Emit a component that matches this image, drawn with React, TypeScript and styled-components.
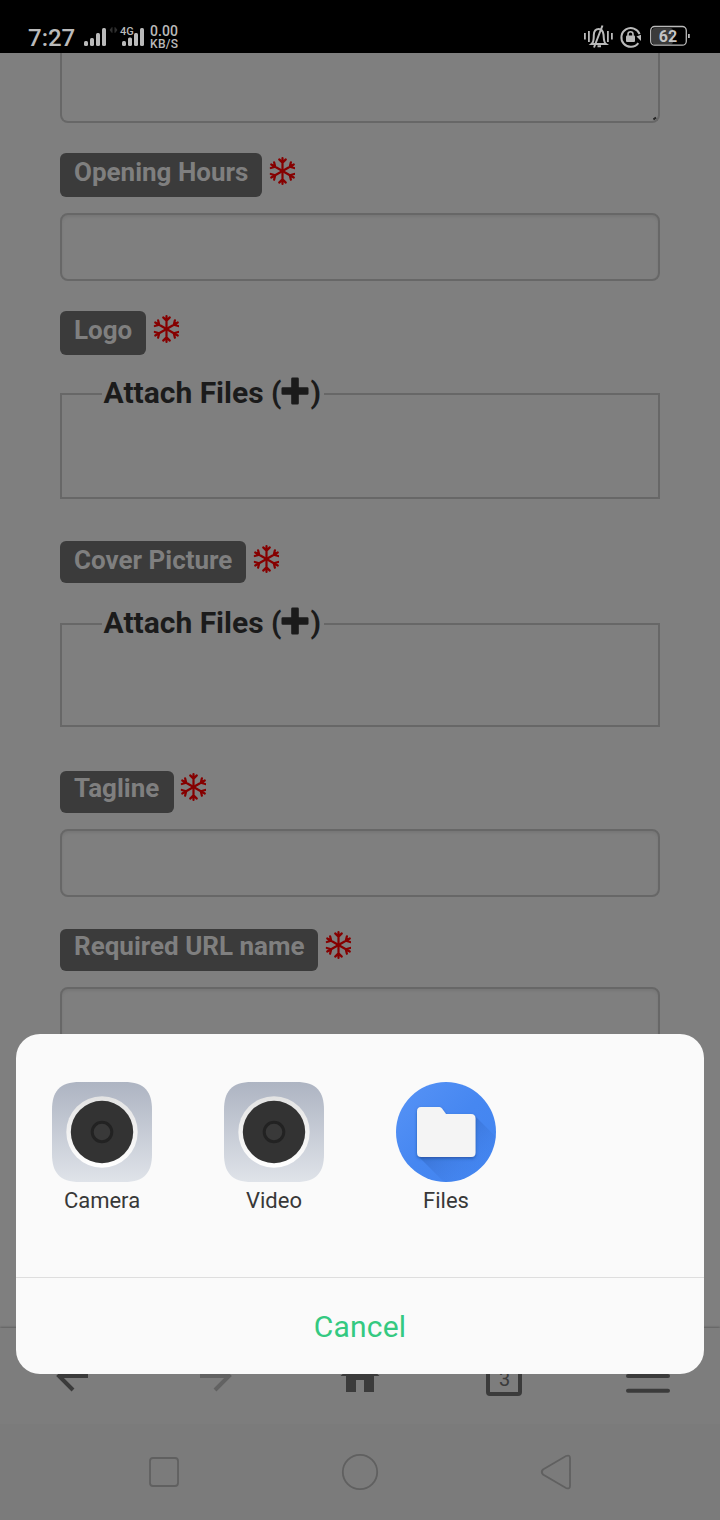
import React from "react";
import styled, { createGlobalStyle } from "styled-components";

const GlobalStyle = createGlobalStyle`
  *, *::before, *::after { box-sizing: border-box; }
  body { margin: 0; background: #7f7f7f; }
`;

const Screen = styled.div`
  position: relative;
  display: flex;
  flex-direction: column;
  width: 720px;
  height: 1520px;
  overflow: hidden;
  background: #7f7f7f;
  font-family: Roboto, "Liberation Sans", sans-serif;
`;

const StatusBar = styled.header`
  flex: none;
  display: flex;
  justify-content: space-between;
  height: 53px;
  padding: 22px 29px 0 28px;
  background: #000;
  color: #bababa;
`;

const StatusGroup = styled.div`
  display: flex;
  align-items: flex-start;
`;

const Clock = styled.span`
  width: 55px;
  font-size: 24px;
  line-height: 32px;
  font-weight: 500;
`;

const SignalIcons = styled.svg`
  display: block;
  width: 64px;
  height: 30px;
`;

const NetworkSpeed = styled.div`
  display: flex;
  flex-direction: column;
  padding: 3px 0 0 3px;
  font-weight: 500;
  line-height: 13px;
`;

const SpeedValue = styled.span`
  font-size: 14px;
  letter-spacing: 0.1px;
`;

const SpeedUnit = styled.span`
  font-size: 12px;
  letter-spacing: 0.3px;
`;

const StatusIcons = styled.svg`
  display: block;
  width: 108px;
  height: 30px;
`;

const Form = styled.main`
  flex: none;
  display: flex;
  flex-direction: column;
  height: 1275px;
  padding: 0 60px;
  overflow: hidden;
`;

const TextArea = styled.div`
  flex: none;
  display: flex;
  justify-content: flex-end;
  align-items: flex-end;
  height: 70px;
  border: 2px solid #676767;
  border-top: 0;
  border-radius: 0 0 8px 8px;
`;

const ResizeGrip = styled.svg`
  display: block;
  width: 5px;
  height: 5px;
`;

const LabelRow = styled.div<{ $gap: number }>`
  flex: none;
  display: flex;
  align-items: flex-start;
  margin-top: ${(p) => p.$gap}px;
`;

const Badge = styled.label<{ $width: number; $height: number; $lead: number }>`
  width: ${(p) => p.$width}px;
  height: ${(p) => p.$height}px;
  padding-left: 14px;
  border-radius: 6px;
  background: #3b3b3b;
  color: #7f7f7f;
  font-size: 26px;
  font-weight: 700;
  line-height: ${(p) => p.$lead}px;
  white-space: nowrap;
`;

const RequiredMark = styled.svg<{ $top: number; $left: number }>`
  display: block;
  width: 26px;
  height: 30px;
  margin: ${(p) => p.$top}px 0 0 ${(p) => p.$left}px;
`;

const TextInput = styled.div`
  flex: none;
  height: 68px;
  margin-top: 16px;
  border: 2px solid #676767;
  border-radius: 8px;
  box-shadow: inset 0 2px 3px rgba(0, 0, 0, 0.07);
`;

const Attachments = styled.fieldset<{ $height: number; $gap: number }>`
  flex: none;
  min-width: 0;
  height: ${(p) => p.$height}px;
  margin: ${(p) => p.$gap}px 0 0;
  padding: 0 40px;
  border: 2px solid #676767;
`;

const Legend = styled.legend`
  display: flex;
  width: 222px;
  height: 42px;
  padding: 0 0 0 1.5px;
  color: #1b1b1b;
  font-size: 30px;
  font-weight: 700;
  line-height: 39px;
  white-space: pre;
`;

const PlusIcon = styled.svg`
  display: block;
  flex: none;
  width: 30px;
  height: 30px;
  margin: 3px 0.5px 0 -1.5px;
`;

const BrowserBar = styled.nav`
  flex: none;
  height: 96px;
  background: #7d7d7d;
  box-shadow: 0 -1px 2px rgba(0, 0, 0, 0.25);
`;

const SystemBar = styled.nav`
  flex: none;
  height: 96px;
  background: #7b7b7b;
`;

const BarIcons = styled.svg`
  display: block;
  width: 720px;
  height: 96px;
`;

const Sheet = styled.section`
  position: absolute;
  left: 16px;
  top: 1034px;
  width: 688px;
  height: 340px;
  display: flex;
  flex-direction: column;
  border-radius: 24px;
  background: #fafafa;
`;

const AppList = styled.div`
  display: flex;
  height: 244px;
  padding: 48px 0 0;
  border-bottom: 1px solid #dedede;
`;

const AppItem = styled.div`
  display: flex;
  flex-direction: column;
  align-items: center;
  width: 172px;
  color: #383838;
  font-size: 22px;
  line-height: 38px;
`;

const AppIcon = styled.svg`
  display: block;
  width: 100px;
  height: 100px;
`;

const CancelButton = styled.button`
  height: 96px;
  padding: 2px 0 0;
  border: 0;
  background: none;
  color: #34c981;
  font-family: inherit;
  font-size: 30px;
  line-height: 36px;
  letter-spacing: 0.2px;
`;

const Snowflake = ({ top, left }: { top: number; left: number }) => (
  <RequiredMark $top={top} $left={left} viewBox="-13.5 -15 26 30" aria-label="required">
    <g stroke="#860000" strokeWidth="2.2" strokeLinecap="round" strokeLinejoin="round" fill="none">
      {[0, 60, 120, 180, 240, 300].map((angle) => (
        <path key={angle} d="M0 0V-13M-3.3 -11.6L0 -8.4L3.3 -11.6" transform={`rotate(${angle})`} />
      ))}
    </g>
  </RequiredMark>
);

type LabelProps = {
  text: string;
  gap: number;
  width: number;
  height?: number;
  lead?: number;
  markTop?: number;
  markLeft?: number;
};

const FieldLabel = ({ text, gap, width, height = 42, lead = 38, markTop = 3, markLeft = 7 }: LabelProps) => (
  <LabelRow $gap={gap}>
    <Badge $width={width} $height={height} $lead={lead}>{text}</Badge>
    <Snowflake top={markTop} left={markLeft} />
  </LabelRow>
);

const FileDrop = ({ height, gap }: { height: number; gap: number }) => (
  <Attachments $height={height} $gap={gap}>
    <Legend>
      Attach Files (
      <PlusIcon viewBox="0 0 30 30">
        <path
          d="M12.5 1.5h5q1.3 0 1.3 1.3v8.4h8.4q1.3 0 1.3 1.3v5q0 1.3-1.3 1.3h-8.4v8.4q0 1.3-1.3 1.3h-5q-1.3 0-1.3-1.3v-8.4H2.8q-1.3 0-1.3-1.3v-5q0-1.3 1.3-1.3h8.4V2.8q0-1.3 1.3-1.3z"
          fill="#1b1b1b"
        />
      </PlusIcon>
      )
    </Legend>
  </Attachments>
);

const LensIcon = ({ id }: { id: string }) => (
  <AppIcon viewBox="0 0 100 100">
    <defs>
      <linearGradient id={`${id}-body`} x1="0" y1="0" x2="0" y2="1">
        <stop offset="0" stopColor="#adb4c2" />
        <stop offset="1" stopColor="#dfe3e9" />
      </linearGradient>
      <linearGradient id={`${id}-ring`} x1="0" y1="0" x2="0" y2="1">
        <stop offset="0" stopColor="#e3e3e3" />
        <stop offset="1" stopColor="#ffffff" />
      </linearGradient>
    </defs>
    <path d="M28 0H72C93 0 100 10 100 28V72C100 90 93 100 72 100H28C7 100 0 90 0 72V28C0 10 7 0 28 0Z" fill={`url(#${id}-body)`} />
    <circle cx="50" cy="50" r="35.7" fill={`url(#${id}-ring)`} />
    <circle cx="50" cy="50" r="31.2" fill="#333" />
    <circle cx="50" cy="50" r="9.8" fill="#393939" stroke="#222" strokeWidth="3" />
  </AppIcon>
);

const FilesIcon = () => (
  <AppIcon viewBox="0 0 100 100">
    <defs>
      <linearGradient id="files-disc" x1="0.1" y1="0.1" x2="0.9" y2="0.9">
        <stop offset="0" stopColor="#5491f5" />
        <stop offset="0.5" stopColor="#4687f1" />
        <stop offset="1" stopColor="#4385f0" />
      </linearGradient>
      <linearGradient id="files-cast" x1="0.3" y1="0.3" x2="0.75" y2="0.75">
        <stop offset="0" stopColor="#3468c4" stopOpacity="0.6" />
        <stop offset="1" stopColor="#4081ec" stopOpacity="0" />
      </linearGradient>
      <filter id="files-soft" x="-20%" y="-20%" width="140%" height="150%">
        <feDropShadow dx="0" dy="1.5" stdDeviation="1.6" floodColor="#173a80" floodOpacity="0.55" />
      </filter>
      <clipPath id="files-clip"><circle cx="50" cy="50" r="50" /></clipPath>
    </defs>
    <circle cx="50" cy="50" r="50" fill="url(#files-disc)" />
    <path d="M22 74L78 33L110 65V110H58Z" fill="url(#files-cast)" clipPath="url(#files-clip)" />
    <path
      d="M25 25H43.5Q45 25 46 26.5L50 32H75Q79.5 32 79.5 36.5V70.5Q79.5 75 75 75H25.5Q21 75 21 70.5V29.5Q21 25 25 25Z"
      fill="#f4f4f4"
      filter="url(#files-soft)"
    />
  </AppIcon>
);

export default function App() {
  return (
    <>
      <GlobalStyle />
      <Screen>
        <StatusBar>
          <StatusGroup>
            <Clock>7:27</Clock>
            <SignalIcons viewBox="83 22 64 30">
              <g fill="#bababa">
                <rect x="84" y="41" width="4" height="5" rx="1.5" />
                <rect x="90" y="38" width="4" height="8" rx="1.5" />
                <rect x="96" y="33" width="4" height="13" rx="1.5" />
                <rect x="102" y="28" width="4" height="18" rx="1.5" />
                <rect x="122" y="41" width="4" height="5" rx="1.5" />
                <rect x="128" y="37.5" width="4" height="8.5" rx="1.5" />
                <rect x="134" y="33" width="4" height="13" rx="1.5" />
                <rect x="140" y="28" width="4" height="18" rx="1.5" />
              </g>
              <path d="M110 30L112 27.500V32.500ZM117 30L115 27.500V32.500Z" fill="#303030" stroke="#303030" strokeWidth="1" />
              <text x="120" y="35" fill="#bababa" fontSize="11" fontWeight="500" fontFamily="Roboto, sans-serif">4G</text>
            </SignalIcons>
            <NetworkSpeed>
              <SpeedValue>0.00</SpeedValue>
              <SpeedUnit>KB/S</SpeedUnit>
            </NetworkSpeed>
          </StatusGroup>
          <StatusIcons viewBox="583 22 108 30">
            <g fill="none" stroke="#bababa" strokeWidth="2">
              <path d="M584.9 33V39.500M588.900 31V42M607.900 31V42M611.900 33V39.500" strokeWidth="1.800" />
              <path d="M591.500 44H606C603.300 42 604 38 603.500 34.500C602.800 30 600.500 29 598.700 29C596.500 29 594 30 593.800 35C593.700 39 594 42 591.500 44ZM594 47.500L602.500 25.500M597.500 46.200H601" />
              <path d="M638.300 43.100A9.400 9.400 0 1 1 639.600 34.200" />
            </g>
            <path d="M636.500 36.500L641 34.800V41Z" fill="#bababa" />
            <rect x="626" y="35.500" width="9" height="6.500" rx="1" fill="#bababa" />
            <path d="M628 36V34.200A2.500 2.500 0 0 1 633 34.200V36" fill="none" stroke="#bababa" strokeWidth="1.600" />
            <rect x="652" y="28" width="21" height="16.500" rx="3" fill="#3b3b3b" />
            <rect x="650.700" y="26.500" width="35.600" height="18.700" rx="4" fill="none" stroke="#bababa" strokeWidth="1.300" />
            <path d="M688 34H689.800V38H688Z" fill="#bababa" />
            <text x="668" y="42" textAnchor="middle" fill="#c4c4c4" fontSize="16" fontWeight="700" fontFamily="Roboto, sans-serif">62</text>
          </StatusIcons>
        </StatusBar>

        <Form>
          <TextArea>
            <ResizeGrip viewBox="0 0 5 5"><path d="M0.500 3.500L3 1.500" stroke="#252525" strokeWidth="2" /></ResizeGrip>
          </TextArea>
          <FieldLabel text="Opening Hours" gap={30} width={202} height={44} />
          <TextInput />
          <FieldLabel text="Logo" gap={30} width={86} height={44} />
          <FileDrop gap={18} height={126} />
          <FieldLabel text="Cover Picture" gap={42} width={186} />
          <FileDrop gap={20} height={124} />
          <FieldLabel text="Tagline" gap={44} width={114} lead={34} markTop={1} markLeft={6} />
          <TextInput />
          <FieldLabel text="Required URL name" gap={32} width={258} lead={34} markTop={1} />
          <TextInput />
        </Form>

        <BrowserBar>
          <BarIcons viewBox="0 1328 720 96">
            <g fill="none" strokeWidth="4">
              <path d="M88 1376H59M73 1390L59 1376L73 1362" stroke="#3b3b3b" />
              <path d="M200 1376H229M215 1390L229 1376L215 1362" stroke="#626262" />
              <rect x="488" y="1362" width="32" height="32" rx="2" stroke="#3b3b3b" />
              <path d="M628 1361H668M628 1376H668M628 1390.700H668" stroke="#3b3b3b" strokeLinecap="round" />
            </g>
            <path d="M340.500 1376L360 1358L379.500 1376H374V1392H364V1380H356V1392H346V1376Z" fill="#3b3b3b" />
            <text x="504.500" y="1385.500" textAnchor="middle" fill="#3b3b3b" fontSize="20" fontFamily="Roboto, sans-serif">3</text>
          </BarIcons>
        </BrowserBar>
        <SystemBar>
          <BarIcons viewBox="0 1424 720 96">
            <g fill="none" stroke="#606060" strokeWidth="1.800">
              <rect x="150" y="1458" width="28" height="28" rx="3" />
              <circle cx="360" cy="1472" r="17.200" />
              <path d="M543 1469.500L566 1456Q570 1454.500 570 1458V1486Q570 1489.500 566 1488L543 1474.500Q540.500 1472 543 1469.500Z" />
            </g>
          </BarIcons>
        </SystemBar>

        <Sheet>
          <AppList>
            <AppItem><LensIcon id="camera" />Camera</AppItem>
            <AppItem><LensIcon id="video" />Video</AppItem>
            <AppItem><FilesIcon />Files</AppItem>
          </AppList>
          <CancelButton>Cancel</CancelButton>
        </Sheet>
      </Screen>
    </>
  );
}
